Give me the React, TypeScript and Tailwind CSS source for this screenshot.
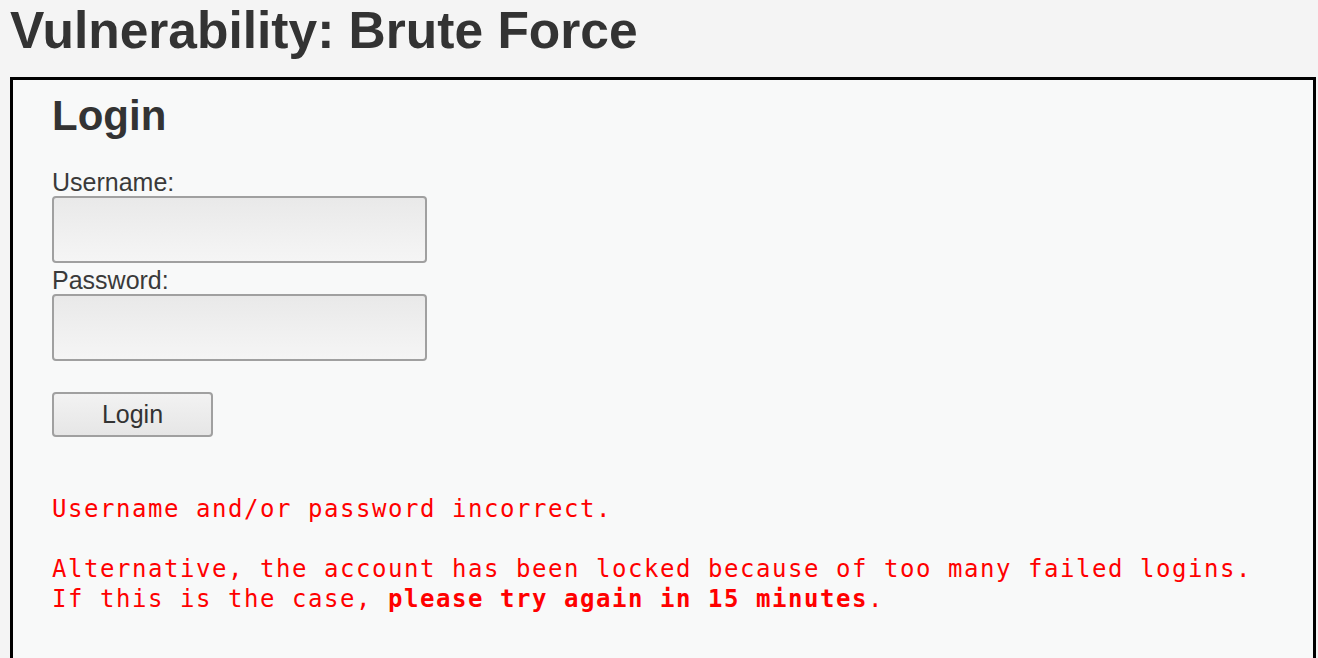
export default function App() {
  return (
    <div className="min-h-[658px] overflow-hidden bg-[#f4f4f4] font-['Liberation_Sans',Arial,sans-serif] text-[#333]">
      <h1 className="px-[10px] pt-[2px] text-[51.5px] font-bold leading-[56px]">Vulnerability: Brute Force</h1>
      <div className="ml-[10px] mr-[2px] mt-[19px] h-[700px] border-[3px] border-black bg-[#f8f9f9] pl-[39px] pt-[14px]">
        <h2 className="text-[42px] font-bold leading-[44px]">Login</h2>
        <form className="mt-[30px] flex flex-col items-start" onSubmit={(e) => e.preventDefault()}>
          <label className="text-[25px] leading-[28px] text-[#3a3a3a]">Username:</label>
          <input
            type="text"
            className="h-[67px] w-[375px] rounded-[4px] border-2 border-[#a0a0a0] bg-gradient-to-b from-[#e9e9e9] to-[#f5f5f5]"
          />
          <label className="mt-[3px] text-[25px] leading-[28px] text-[#3a3a3a]">Password:</label>
          <input
            type="password"
            className="h-[67px] w-[375px] rounded-[4px] border-2 border-[#a0a0a0] bg-gradient-to-b from-[#e9e9e9] to-[#f5f5f5]"
          />
          <button
            type="submit"
            className="mt-[31px] h-[45px] w-[161px] rounded-[4px] border-2 border-[#a0a0a0] bg-gradient-to-b from-[#f2f2f2] to-[#e6e6e6] text-[25px] text-[#333]"
          >
            Login
          </button>
        </form>
        <pre className="mt-[57px] font-['DejaVu_Sans_Mono',monospace] text-[24px] leading-[30px] tracking-[1.55px] text-[#ff0000]">
          {"Username and/or password incorrect.\n\nAlternative, the account has been locked because of too many failed logins.\nIf this is the case, "}
          <b>please try again in 15 minutes</b>
          {"."}
        </pre>
      </div>
    </div>
  );
}
